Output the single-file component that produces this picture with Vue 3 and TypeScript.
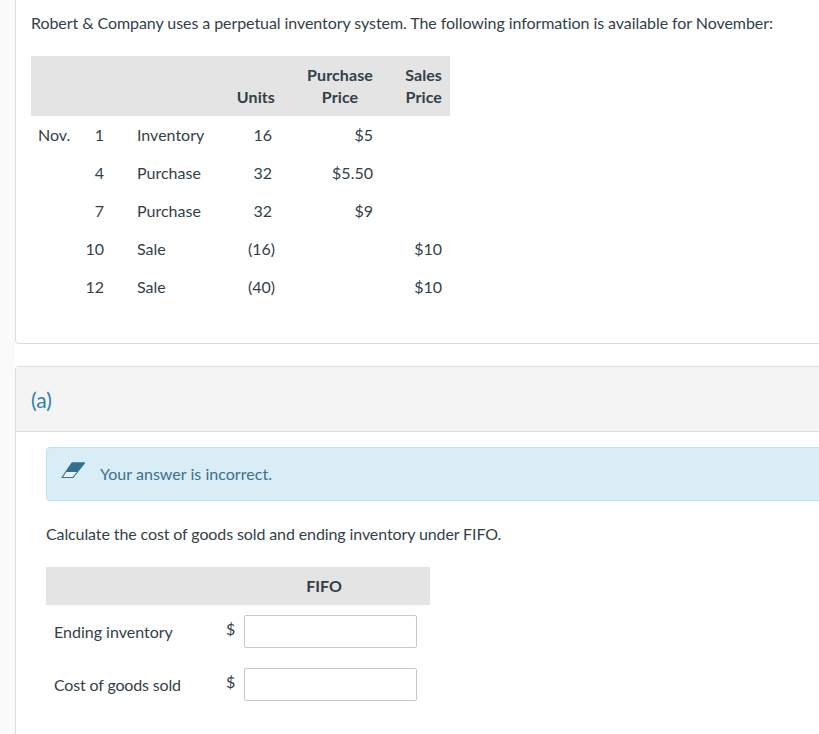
<script setup lang="ts">
interface Row { m: string; d: string; label: string; units: string; buy: string; sell: string }
const rows: Row[] = [
  { m: 'Nov.', d: '1', label: 'Inventory', units: '16', buy: '$5', sell: '' },
  { m: '', d: '4', label: 'Purchase', units: '32', buy: '$5.50', sell: '' },
  { m: '', d: '7', label: 'Purchase', units: '32', buy: '$9', sell: '' },
  { m: '', d: '10', label: 'Sale', units: '(16)', buy: '', sell: '$10' },
  { m: '', d: '12', label: 'Sale', units: '(40)', buy: '', sell: '$10' },
]
const answers = ['Ending inventory', 'Cost of goods sold']
</script>

<template>
  <div class="page">
    <section class="card top">
      <p class="intro">Robert &amp; Company uses a perpetual inventory system. The following information is available for November:</p>
      <table class="data">
        <colgroup>
          <col style="width:50px" /><col style="width:31px" /><col style="width:117px" />
          <col style="width:54px" /><col style="width:114px" /><col style="width:53px" />
        </colgroup>
        <thead>
          <tr>
            <th></th><th></th><th></th>
            <th class="r8">Units</th>
            <th class="c">Purchase<br />Price</th>
            <th class="r8">Sales<br />Price</th>
          </tr>
        </thead>
        <tbody>
          <tr v-for="r in rows" :key="r.d">
            <td class="month">{{ r.m }}</td>
            <td class="r8">{{ r.d }}</td>
            <td class="label">{{ r.label }}</td>
            <td class="r8" :class="{ plain: r.units.length === 2 }">{{ r.units }}</td>
            <td class="buy">{{ r.buy }}</td>
            <td class="r8">{{ r.sell }}</td>
          </tr>
        </tbody>
      </table>
    </section>

    <section class="card part">
      <header class="part-head">(a)</header>
      <div class="part-body">
        <div class="alert">
          <svg class="eraser" width="24" height="16" viewBox="0 0 24 16" aria-hidden="true">
            <path d="M11 1H23.5L12 15.5H1z" fill="#e8f4f9" stroke="#33708f" stroke-width="1.2" stroke-linejoin="round" />
            <path d="M11 .6H23.8L16.4 10H4.6z" fill="#33708f" />
          </svg>
          <span class="alert-text">Your answer is incorrect.</span>
        </div>
        <p class="prompt">Calculate the cost of goods sold and ending inventory under FIFO.</p>
        <div class="answer">
          <div class="answer-head">FIFO</div>
          <div v-for="a in answers" :key="a" class="answer-row">
            <span class="answer-label">{{ a }}</span>
            <span class="dollar">$</span>
            <input class="field" type="text" :aria-label="a" />
          </div>
        </div>
      </div>
    </section>
  </div>
</template>

<style>
html, body { margin: 0; background: #fff; }
</style>

<style scoped>
.page {
  width: 819px;
  height: 734px;
  overflow: hidden;
  box-sizing: border-box;
  padding-left: 15px;
  background: linear-gradient(to right, #fafafa 15px, #fff 15px);
  font-family: Lato, "Liberation Sans", sans-serif;
  font-size: 16px;
  color: #333f48;
}
.card {
  width: 900px;
  box-sizing: border-box;
  background: #fff;
  border: 1px solid #dcdcdc;
  border-right: 0;
}
.top {
  height: 344px;
  border-top: 0;
  border-radius: 0 0 0 4px;
  padding: 13px 0 0 15px;
}
.intro { margin: 0 0 24px; line-height: 19px; white-space: nowrap; letter-spacing: -0.07px; }
.data { border-collapse: collapse; table-layout: fixed; width: 419px; }
.data thead tr { background: #e4e4e4; }
.data th { height: 60px; padding: 8px 0 8px; box-sizing: border-box; vertical-align: bottom; font-weight: 700; line-height: 22px; letter-spacing: 0.1px; }
.data td { height: 38px; padding: 0 0 2px; box-sizing: border-box; }
.r8 { text-align: right; padding-right: 8px !important; }
.plain { padding-right: 11px !important; }
.c { text-align: center; }
.month { padding-left: 7px !important; }
.label { padding-left: 25px !important; }
.buy { text-align: right; padding-right: 24px !important; }
.part { margin-top: 22px; height: 400px; border-radius: 4px 0 0 0; }
.part-head {
  height: 65px;
  box-sizing: border-box;
  padding: 20px 0 0 15px;
  background: #f4f4f4;
  border-bottom: 1px solid #dcdcdc;
  color: #2f7fa8;
  font-size: 21px;
  line-height: 26px;
}
.part-body { padding: 15px 0 0 30px; }
.alert {
  height: 54px;
  box-sizing: border-box;
  display: flex;
  align-items: center;
  gap: 15px;
  padding-left: 14px;
  background: #d9edf6;
  border: 1px solid #bfe3ef;
  border-radius: 4px 0 0 4px;
  color: #3d6f8e;
}
.alert-text { margin-top: -2px; letter-spacing: 0.03px; }
.eraser { flex: none; margin-top: -8px; }
.prompt { margin: 23px 0 24px; line-height: 19px; letter-spacing: -0.108px; }
.answer { width: 384px; }
.answer-head {
  height: 38px;
  background: #e4e4e4;
  box-sizing: border-box;
  padding: 0 0 2px 172px;
  display: flex;
  align-items: center;
  justify-content: center;
  font-weight: 700;
}
.answer-row { height: 53px; display: flex; align-items: center; }
.answer-label { width: 172px; padding-left: 8px; box-sizing: border-box; }
.answer-row:last-child .answer-label { letter-spacing: -0.16px; }
.dollar { width: 26px; box-sizing: border-box; padding-left: 8px; margin-top: -7px; }
.field {
  width: 173px;
  height: 33px;
  box-sizing: border-box;
  border: 1px solid #c8c8c8;
  border-radius: 2px;
  background: #fff;
  padding: 0;
  margin-top: -1px;
}
</style>
